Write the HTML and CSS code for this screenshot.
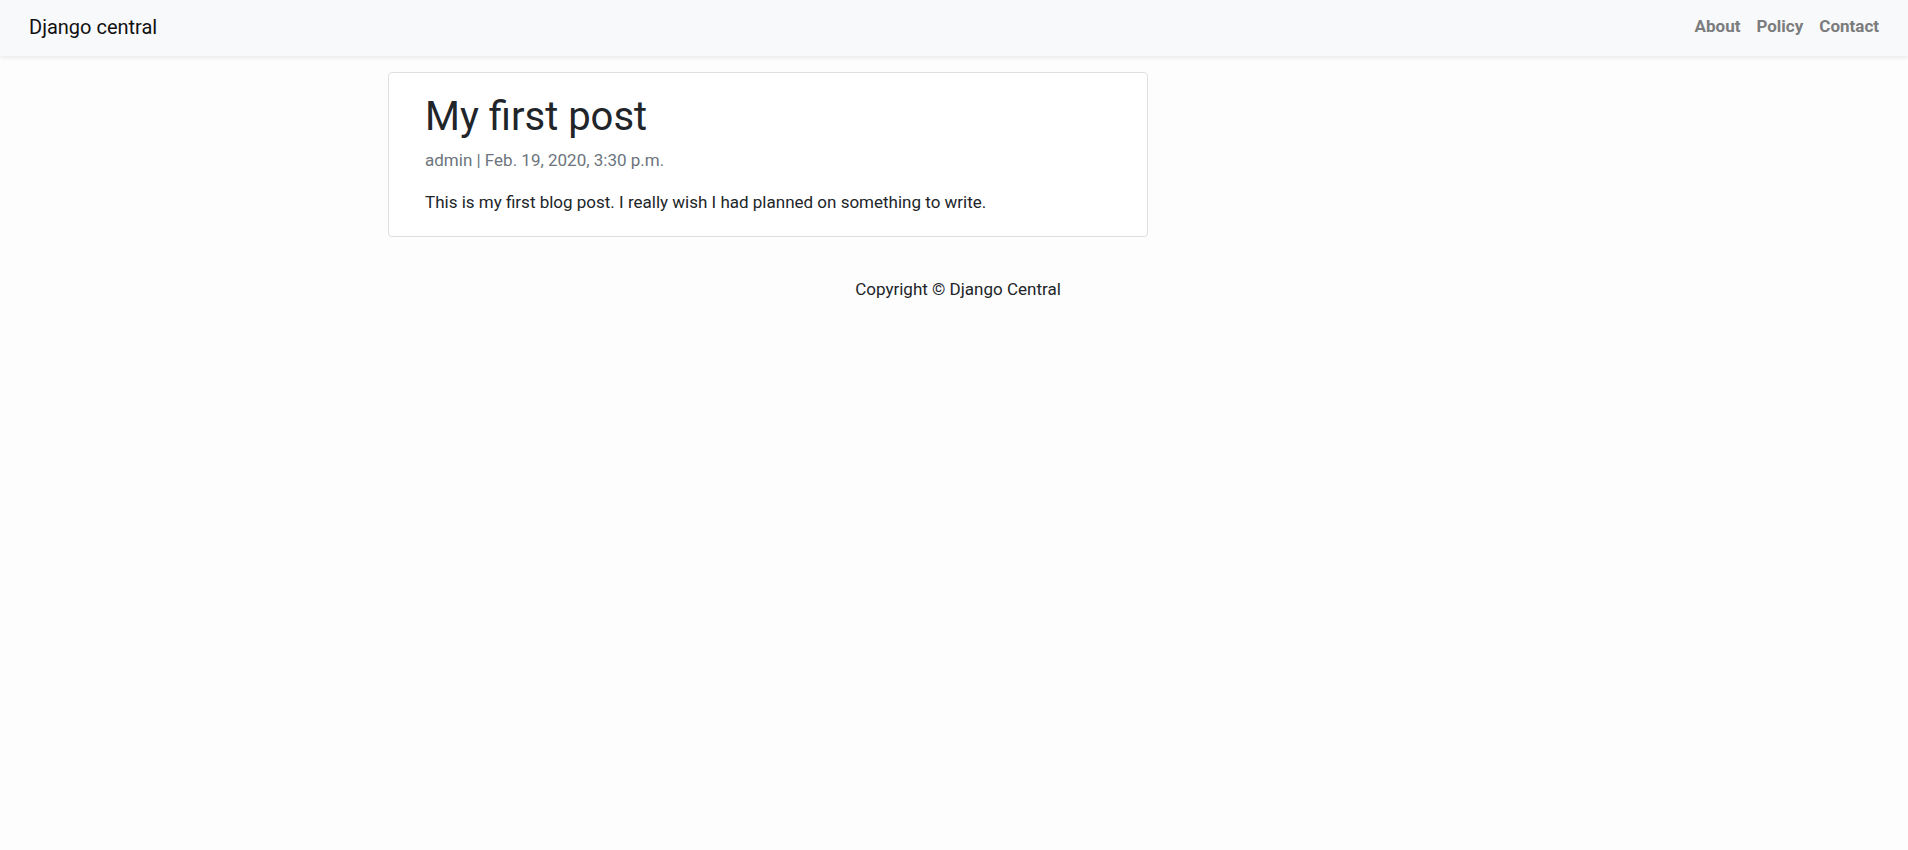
FILE: index.html
```html
<!DOCTYPE html>
<html lang="en">
<head>
<meta charset="utf-8">
<title>Django central</title>
<link rel="stylesheet" href="styles.css">
</head>
<body>
<nav class="navbar">
  <a class="brand" href="#">Django central</a>
  <ul class="nav-links">
    <li><a href="#">About</a></li>
    <li><a href="#">Policy</a></li>
    <li><a href="#">Contact</a></li>
  </ul>
</nav>
<main class="main">
  <article class="card">
    <h1 class="card-title">My first post</h1>
    <p class="card-meta">admin | Feb. 19, 2020, 3:30 p.m.</p>
    <p class="card-text">This is my first blog post. I really wish I had planned on something to write.</p>
  </article>
</main>
<footer class="footer">
  <p class="footer-text">Copyright © Django Central</p>
</footer>
</body>
</html>
```

FILE: styles.css
```css
* { box-sizing: border-box; }
html, body { margin: 0; padding: 0; }
body {
  font-family: Roboto, "Liberation Sans", sans-serif;
  font-size: 17px;
  line-height: 1.5;
  color: #212529;
  background: #fdfdfd;
  min-height: 850px;
}
a { text-decoration: none; }
.navbar {
  height: 56px;
  display: flex;
  align-items: center;
  justify-content: space-between;
  padding: 0 21px 2px 29px;
  background: #f8f9fa;
  box-shadow: 0 2px 4px rgba(0,0,0,0.08);
  position: relative;
}
.brand {
  font-size: 20px;
  line-height: 30px;
  color: #111;
}
.nav-links {
  display: flex;
  list-style: none;
  margin: 0;
  padding: 0;
}
.nav-links a {
  display: block;
  padding: 8px;
  font-weight: 700;
  color: #7b7c7d;
}
.main {
  padding-top: 16px;
  padding-left: 388px;
}
.card {
  width: 760px;
  background: #fff;
  border: 1px solid #dfdfdf;
  border-radius: 4px;
  padding: 20px 36px 21px 36px;
}
.card-title {
  margin: 0 0 7px 0;
  font-size: 40px;
  font-weight: 400;
  line-height: 1.2;
  color: #212529;
}
.card-meta {
  margin: 0 0 16px 0;
  color: #6c757d;
}
.card-text {
  margin: 0;
  color: #212529;
}
.footer {
  padding-top: 40px;
  padding-left: 8px;
  text-align: center;
}
.footer-text { margin: 0; color: #212529; }
```
